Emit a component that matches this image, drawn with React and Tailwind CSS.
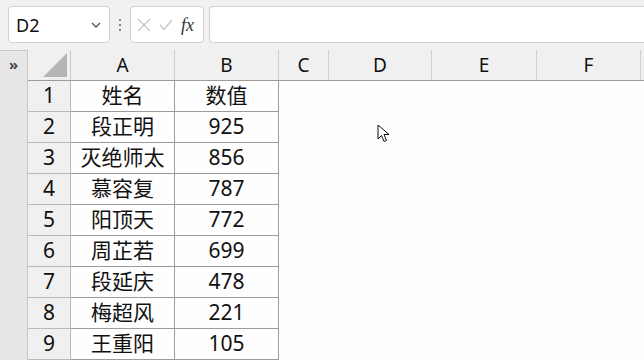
import React from 'react';

const rows = [
  ['姓名', '数值'],
  ['段正明', '925'],
  ['灭绝师太', '856'],
  ['慕容复', '787'],
  ['阳顶天', '772'],
  ['周芷若', '699'],
  ['段延庆', '478'],
  ['梅超风', '221'],
  ['王重阳', '105'],
];

const font = { fontFamily: '"Noto Sans", "Noto Sans CJK SC", sans-serif' };

export default function App() {
  return (
    <div className="w-[644px] h-[360px] overflow-hidden bg-[#fefefe] relative text-[#111]" style={font}>
      {/* formula bar */}
      <div className="h-[50px] bg-[#f1f1f1] flex items-start pt-[6px] pl-[8px]">
        <div className="w-[102px] h-[37px] shrink-0 bg-white border border-[#d2d2d2] rounded-[4px] flex items-center pl-[7px] pr-[8px] justify-between">
          <span className="text-[18px] leading-none">D2</span>
          <svg width="10" height="6" viewBox="0 0 10 6" className="mt-[1px]">
            <path d="M1 1 L5 5 L9 1" fill="none" stroke="#555" strokeWidth="1.3" />
          </svg>
        </div>
        <div className="w-[20px] h-[37px] shrink-0 flex flex-col items-center justify-center gap-[3px]">
          <span className="w-[2px] h-[2px] bg-[#888]" />
          <span className="w-[2px] h-[2px] bg-[#888]" />
          <span className="w-[2px] h-[2px] bg-[#888]" />
        </div>
        <div className="w-[74px] h-[37px] shrink-0 bg-white border border-[#d2d2d2] rounded-[4px] flex items-center pl-[6px] gap-[8px]">
          <svg width="14" height="14" viewBox="0 0 14 14">
            <path d="M1 1 L13 13 M13 1 L1 13" stroke="#c4c4c4" strokeWidth="1.2" />
          </svg>
          <svg width="14" height="12" viewBox="0 0 14 12">
            <path d="M1 6 L5 10.5 L13 1" fill="none" stroke="#c4c4c4" strokeWidth="1.2" />
          </svg>
          <span className="text-[18px] italic leading-none text-[#333]" style={{ fontFamily: '"Liberation Serif", serif' }}>fx</span>
        </div>
        <div className="ml-[5px] flex-1 h-[37px] bg-white border border-[#d2d2d2] rounded-l-[4px] border-r-0" />
      </div>

      {/* sheet */}
      <div className="flex">
        <div className="w-[28px] shrink-0 h-[310px] bg-[#e6e6e6] border-r border-t border-[#c9c9c9] flex justify-center pt-[6px]">
          <span className="text-[15px] leading-none font-bold text-[#444]">»</span>
        </div>
        <div className="flex flex-col shrink-0">
          {/* header row */}
          <div className="flex h-[31px] bg-[#f0f0f0] border-b border-[#9c9c9c] text-[19px]">
            <div className="w-[43px] shrink-0 h-[30px] relative border-r border-[#cfcfcf]">
              <svg width="24" height="24" viewBox="0 0 24 24" className="absolute right-[3px] bottom-[3px]">
                <path d="M24 0 L24 24 L0 24 Z" fill="#b5b5b5" />
              </svg>
            </div>
            <div className="w-[104px] shrink-0 flex items-center justify-center border-r border-[#cfcfcf]">A</div>
            <div className="w-[104px] shrink-0 flex items-center justify-center border-r border-[#cfcfcf]">B</div>
            <div className="w-[50px] shrink-0 flex items-center justify-center border-r border-[#cfcfcf]">C</div>
            <div className="w-[103px] shrink-0 flex items-center justify-center border-r border-[#cfcfcf]">D</div>
            <div className="w-[105px] shrink-0 flex items-center justify-center border-r border-[#cfcfcf]">E</div>
            <div className="w-[104px] shrink-0 flex items-center justify-center border-r border-[#cfcfcf]">F</div>
            <div className="w-[60px] shrink-0" />
          </div>
          {rows.map((r, i) => (
            <div key={i} className="flex h-[31px] text-[21px]">
              <div className="w-[43px] shrink-0 bg-[#f0f0f0] border-b border-r border-[#b8b8b8] flex items-center justify-center">{i + 1}</div>
              <div className="w-[104px] shrink-0 border-b border-r border-[#9c9c9c] flex items-center justify-center">{r[0]}</div>
              <div className="w-[104px] shrink-0 border-b border-r border-[#9c9c9c] flex items-center justify-center">{r[1]}</div>
            </div>
          ))}
        </div>
      </div>

      {/* mouse pointer */}
      <svg width="14" height="20" viewBox="0 0 14 20" className="absolute left-[377px] top-[124px]">
        <path d="M1 1 L1 15 L4.5 11.5 L7 17.5 L9.5 16.5 L7 10.5 L12 10.5 Z" fill="#fff" stroke="#111" strokeWidth="1" strokeLinejoin="round" />
      </svg>
    </div>
  );
}
